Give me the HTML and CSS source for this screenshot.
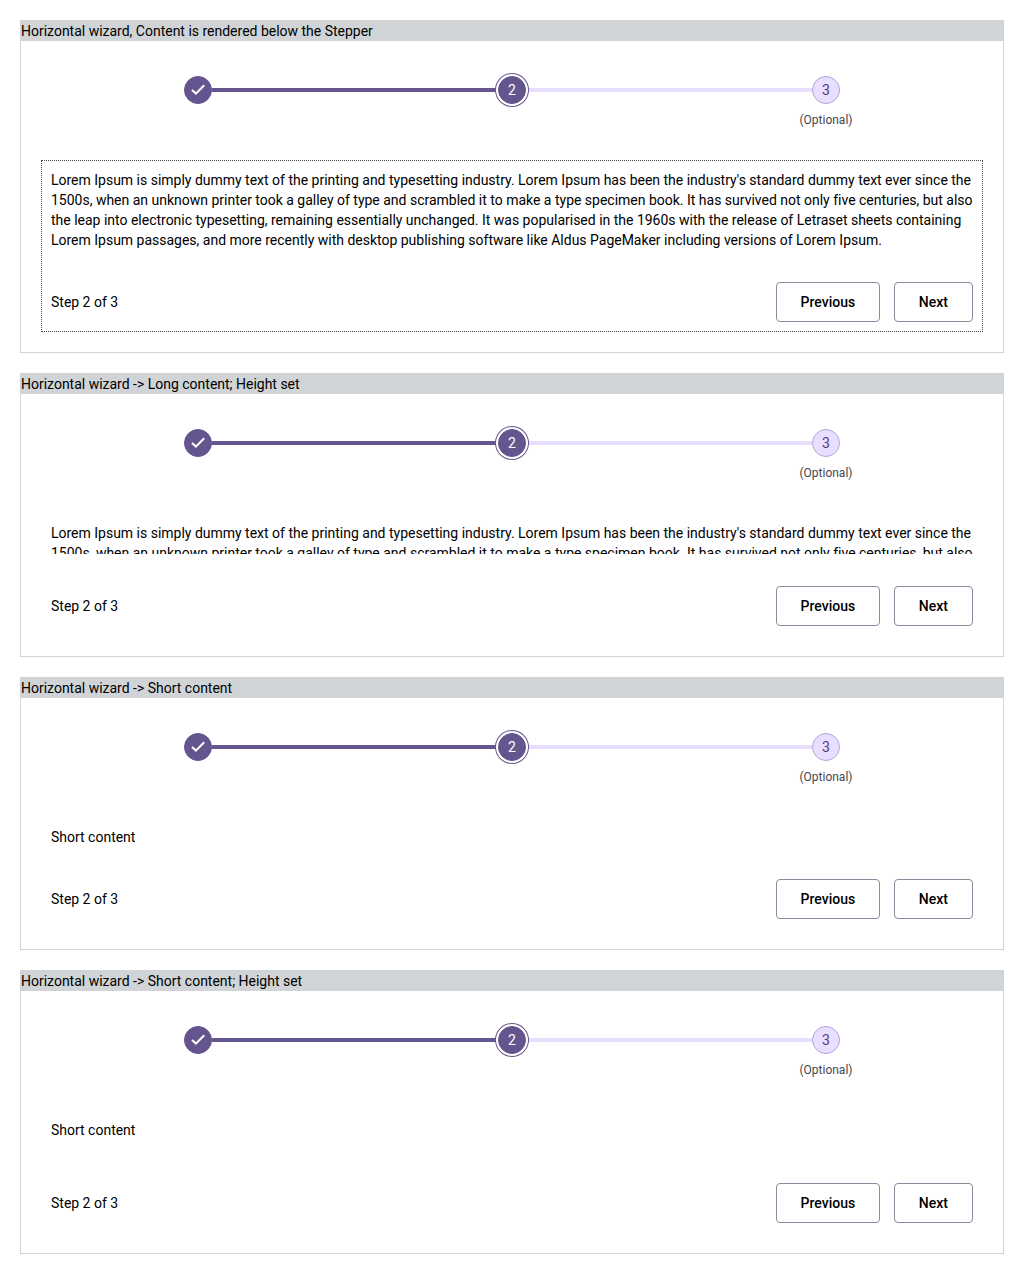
FILE: index.html
```html
<!DOCTYPE html>
<html lang="en">
<head>
<meta charset="utf-8">
<title>Horizontal wizard</title>
<link rel="stylesheet" href="styles.css">
</head>
<body>
<section class="panel">
  <h2 class="panel-title">Horizontal wizard, Content is rendered below the Stepper</h2>
  <div class="wizard">
    <ol class="stepper">
      <li class="step done"><span class="badge"><svg class="check" viewBox="0 0 28 28"><path d="M8 13.9 11.9 17.6 20.2 9.2"/></svg></span></li>
      <li class="step current"><span class="badge">2</span></li>
      <li class="step"><span class="badge">3</span><span class="hint">(Optional)</span></li>
    </ol>
    <div class="pane focused">
      <div class="content">Lorem Ipsum is simply dummy text of the printing and typesetting industry. Lorem Ipsum has been the industry's standard dummy text ever since the 1500s, when an unknown printer took a galley of type and scrambled it to make a type specimen book. It has survived not only five centuries, but also the leap into electronic typesetting, remaining essentially unchanged. It was popularised in the 1960s with the release of Letraset sheets containing Lorem Ipsum passages, and more recently with desktop publishing software like Aldus PageMaker including versions of Lorem Ipsum.</div>
      <div class="actions"><span class="progress">Step 2 of 3</span><button class="button previous">Previous</button><button class="button">Next</button></div>
    </div>
  </div>
</section>
<section class="panel">
  <h2 class="panel-title">Horizontal wizard -&gt; Long content; Height set</h2>
  <div class="wizard">
    <ol class="stepper">
      <li class="step done"><span class="badge"><svg class="check" viewBox="0 0 28 28"><path d="M8 13.9 11.9 17.6 20.2 9.2"/></svg></span></li>
      <li class="step current"><span class="badge">2</span></li>
      <li class="step"><span class="badge">3</span><span class="hint">(Optional)</span></li>
    </ol>
    <div class="pane">
      <div class="content fixed">Lorem Ipsum is simply dummy text of the printing and typesetting industry. Lorem Ipsum has been the industry's standard dummy text ever since the 1500s, when an unknown printer took a galley of type and scrambled it to make a type specimen book. It has survived not only five centuries, but also</div>
      <div class="actions"><span class="progress">Step 2 of 3</span><button class="button previous">Previous</button><button class="button">Next</button></div>
    </div>
  </div>
</section>
<section class="panel">
  <h2 class="panel-title">Horizontal wizard -&gt; Short content</h2>
  <div class="wizard">
    <ol class="stepper">
      <li class="step done"><span class="badge"><svg class="check" viewBox="0 0 28 28"><path d="M8 13.9 11.9 17.6 20.2 9.2"/></svg></span></li>
      <li class="step current"><span class="badge">2</span></li>
      <li class="step"><span class="badge">3</span><span class="hint">(Optional)</span></li>
    </ol>
    <div class="pane">
      <div class="content">Short content</div>
      <div class="actions"><span class="progress">Step 2 of 3</span><button class="button previous">Previous</button><button class="button">Next</button></div>
    </div>
  </div>
</section>
<section class="panel">
  <h2 class="panel-title">Horizontal wizard -&gt; Short content; Height set</h2>
  <div class="wizard">
    <ol class="stepper">
      <li class="step done"><span class="badge"><svg class="check" viewBox="0 0 28 28"><path d="M8 13.9 11.9 17.6 20.2 9.2"/></svg></span></li>
      <li class="step current"><span class="badge">2</span></li>
      <li class="step"><span class="badge">3</span><span class="hint">(Optional)</span></li>
    </ol>
    <div class="pane">
      <div class="content fixed">Short content</div>
      <div class="actions"><span class="progress">Step 2 of 3</span><button class="button previous">Previous</button><button class="button">Next</button></div>
    </div>
  </div>
</section>
</body>
</html>
```
FILE: styles.css
```css
* { box-sizing: border-box; }

body {
  display: flex;
  flex-direction: column;
  gap: 20px;
  margin: 0;
  padding: 20px;
  background: #fff;
  color: #000;
  font: 14px/20px Roboto, sans-serif;
  letter-spacing: -0.007px;
}

.panel { border: 1px solid #d0d4d7; }

.panel-title {
  margin: 0;
  background: #d0d4d7;
  font-size: 14px;
  font-weight: 400;
}

.wizard { padding: 0 20px 20px; }

.stepper {
  display: grid;
  grid-template-columns: repeat(3, 1fr);
  height: 119px;
  margin: 0;
  padding: 35px 0 0;
  list-style: none;
}

.step {
  position: relative;
  display: flex;
  flex-direction: column;
  align-items: center;
  gap: 6px;
}

/* connector running back to the previous step */
.step + .step::before {
  content: "";
  position: absolute;
  top: 12px;
  right: calc(50% + 14px);
  width: calc(100% - 28px);
  height: 4px;
  background: #e8deff;
}

.step.current::before { background: #65558f; }

.badge {
  position: relative;
  display: flex;
  align-items: center;
  justify-content: center;
  width: 28px;
  height: 28px;
  border: 1px solid #b5a4d8;
  border-radius: 50%;
  background: #e8deff;
  color: #4f3d7c;
}

.done .badge,
.current .badge {
  border-color: #65558f;
  background: #65558f;
  color: #fff;
}

.current .badge {
  z-index: 1;
  box-shadow: 0 0 0 2px #fff, 0 0 0 3px #65558f;
}

.check {
  flex: none;
  width: 28px;
  height: 28px;
  fill: none;
  stroke: #fff;
  stroke-width: 2;
}

.hint {
  color: #49454f;
  font-size: 12px;
}

.pane {
  padding: 9px;
  border: 1px solid transparent;
}

.pane.focused { border: 1px dotted #49454f; }

.content { overflow: hidden; }

.content.fixed { height: 31px; }

.actions {
  display: flex;
  align-items: center;
  gap: 14px;
  margin-top: 32px;
}

.progress { flex: 1; }

.button {
  height: 40px;
  padding: 0 24px;
  border: 1px solid #8e899c;
  border-radius: 4px;
  background: #fff;
  color: #000;
  font: 500 14px/20px Roboto, sans-serif;
}

.button.previous {
  width: 104px;
  padding: 0;
}
```
